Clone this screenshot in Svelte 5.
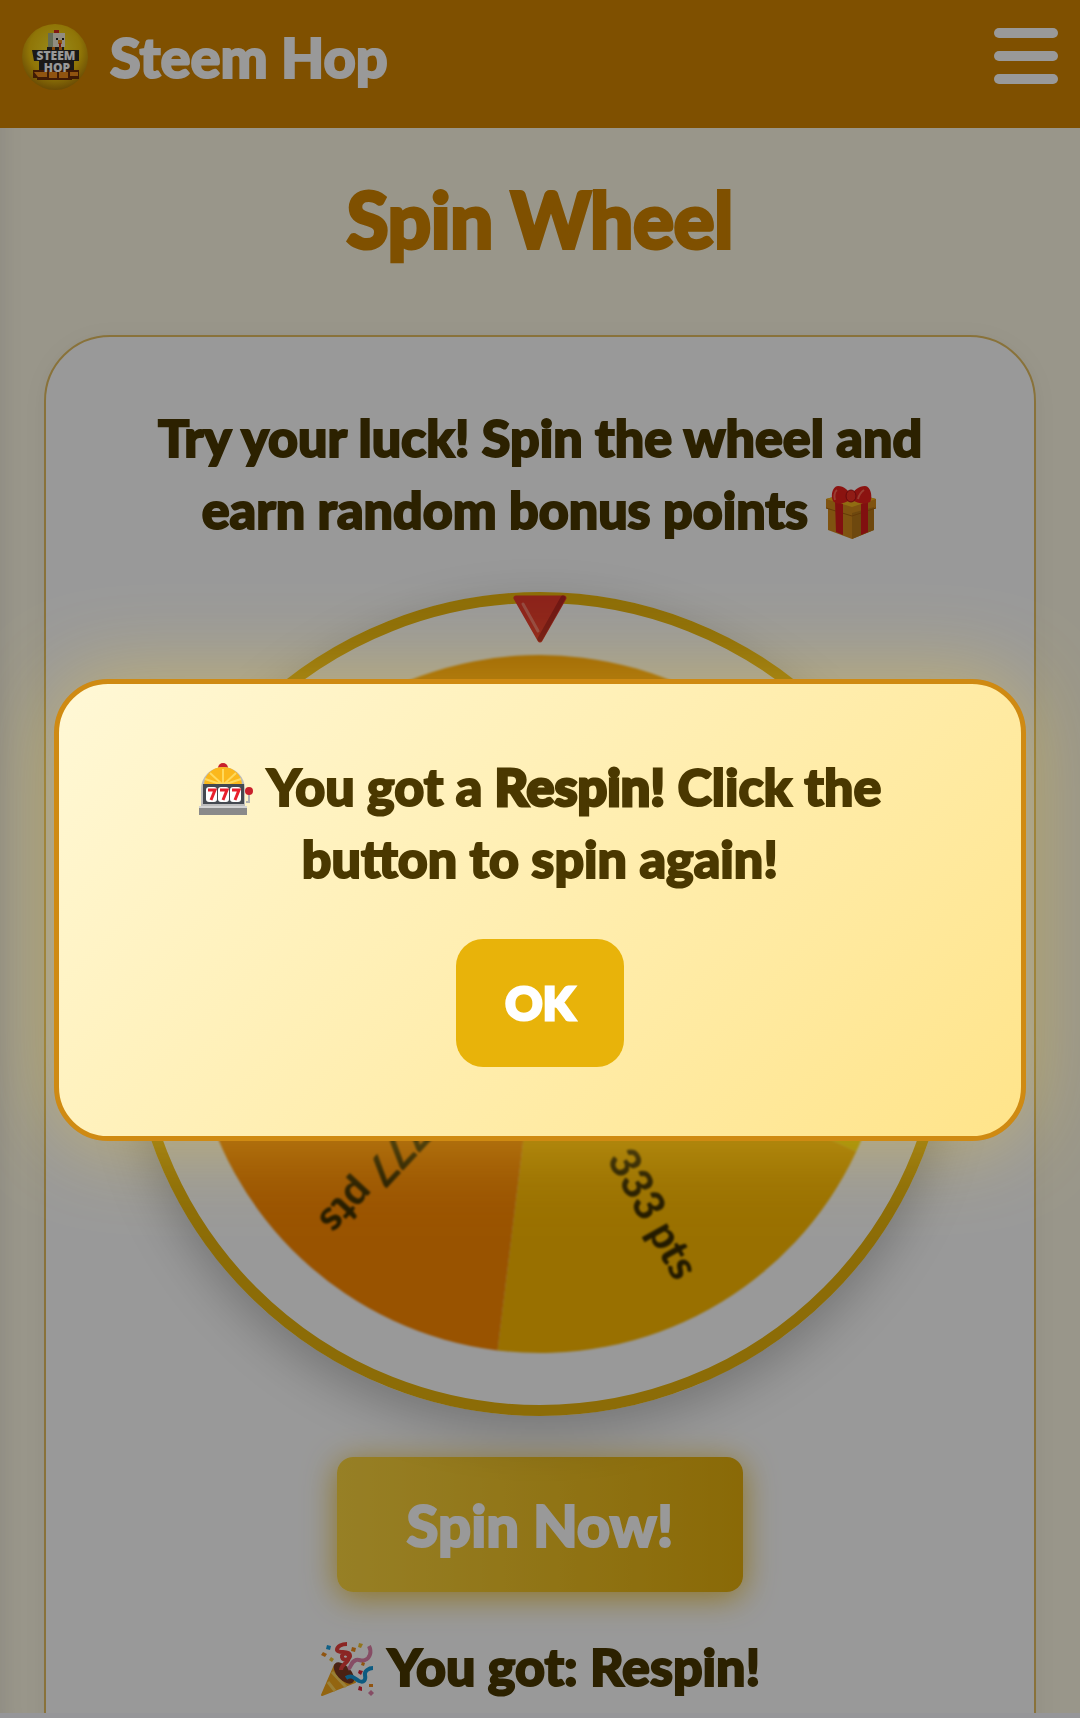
<script>
  let menuOpen = false
  let showModal = true
  let spinning = false
  let prize = 'Respin'

  const RADIUS = 349
  const OFFSET = 25
  const SLICE = 72

  // Clockwise from the right-hand side
  const segments = [
    { label: '333 pts', color: '#ffbb00' },
    { label: '777 pts', color: '#ff8a00' },
    { color: '#ffc933' },
    { color: '#ffa200' },
    { color: '#ffdd00' }
  ]

  function point(deg) {
    const rad = (deg * Math.PI) / 180
    return `${(RADIUS * Math.cos(rad)).toFixed(1)} ${(RADIUS * Math.sin(rad)).toFixed(1)}`
  }

  function slicePath(i) {
    const start = OFFSET + i * SLICE
    return `M0 0 L${point(start)} A${RADIUS} ${RADIUS} 0 0 1 ${point(start + SLICE)} Z`
  }

  function spin() {
    spinning = true
    setTimeout(() => {
      spinning = false
      showModal = true
    }, 600)
  }

  function closeModal() {
    showModal = false
  }
</script>

<div class="page">
  <header class="navbar">
    <a class="brand" href="#home">
      <svg class="logo" viewBox="0 0 66 66" aria-hidden="true">
        <defs>
          <radialGradient id="ball" cx="50%" cy="40%" r="60%">
            <stop offset="0" stop-color="#ffe92e" />
            <stop offset="0.65" stop-color="#f0c40c" />
            <stop offset="1" stop-color="#b07c08" />
          </radialGradient>
        </defs>
        <circle cx="33" cy="33" r="33" fill="url(#ball)" />
        <path d="M10 26h15v-3h17v3h15v11h-5v12H17V37h-5z" fill="#2c2a28" />
        <path d="M32 6h5v4h-5z" fill="#d8281c" />
        <path d="M26 9h17v14H26z" fill="#f3ead8" />
        <path d="M26 9h5v14h-5z" fill="#a9b48e" />
        <path d="M34 14h2v2h-2zM40 14h2v2h-2z" fill="#222" />
        <path d="M36 16h4v4h-4z" fill="#f28a14" />
        <path d="M37 19h2v4h-2z" fill="#cc2418" />
        <path d="M30 23h3v3h-3zM37 23h3v3h-3z" fill="#e07812" />
        <path d="M11 46h46v9H50v1H15v-2h-4z" fill="#6b2c08" />
        <path d="M12 48h13v5H16zM27 48h8v6h-8zM37 48h9v6h-9zM48 48h8v4h-8z" fill="#f08c1c" />
        <text x="34" y="36" class="logo-text">STEEM</text>
        <text x="35" y="48" class="logo-text">HOP</text>
      </svg>
      <span>Steem Hop</span>
    </a>
    <button class="menu" aria-label="Toggle menu" on:click={() => (menuOpen = !menuOpen)}>
      <span></span>
      <span></span>
      <span></span>
    </button>
  </header>

  <main>
    <h1>Spin Wheel</h1>

    <section class="card">
      <p class="intro">
        Try your luck! Spin the wheel and earn random bonus points
        <svg class="emoji" viewBox="0 0 52 54" role="img" aria-label="gift">
          <path d="M1 14 26 7l25 7v9l-2 1v21L27 54 3 45V24l-2-1z" fill="#d48a1c" />
          <path d="M27 28 49 22v23L27 54z" fill="#b87818" />
          <path d="M1 14 26 7l25 7-24 8z" fill="#f2b41e" />
          <path d="M1 23 27 31l24-8" fill="none" stroke="#a8640c" stroke-width="1" />
          <path d="m10 16 8 3v31l-7-3zM36 19l7-3v31l-7 3z" fill="#d81c1c" />
          <path d="M26 14C18 20 12 19 9 17 5 13 7 1 13 1c6 0 11 5 13 9 2-4 8-9 14-9 6 0 8 12 5 16-4 2-11 3-19-3z" fill="#e8201c" />
          <path d="M12 5c-3 2-3 7-2 10M39 5c-3 2-5 5-6 9" fill="none" stroke="#ff6650" stroke-width="2" />
          <ellipse cx="26" cy="11" rx="5" ry="6" fill="#f03024" stroke="#a81014" />
        </svg>
      </p>

      <div class="wheel">
        <svg class="slices" class:spinning viewBox="-350 -350 700 700" role="img" aria-label="Prize wheel">
          {#each segments as seg, i}
            <path d={slicePath(i)} fill={seg.color} />
            {#if seg.label}
              <text
                class="slice-label"
                x="309"
                y="17"
                transform="rotate({OFFSET + SLICE * (i + 0.5)})">{seg.label}</text>
            {/if}
          {/each}
        </svg>
        <svg class="pointer" viewBox="0 0 54 48" aria-hidden="true">
          <path d="M3 3h48L27 45z" fill="#e8382c" stroke="#e8382c" stroke-width="5" stroke-linejoin="round" />
          <path d="M50 3 27 44" stroke="#b82420" stroke-width="5" stroke-linecap="round" />
          <path d="m10 9 15 27" stroke="#f4796c" stroke-width="3" stroke-linecap="round" />
        </svg>
      </div>

      <button class="spin" on:click={spin} disabled={spinning}>Spin Now!</button>

      <p class="result">
        <svg class="emoji" viewBox="0 0 52 54" role="img" aria-label="party">
          <path d="M1 53 14 23l20 17z" fill="#f5a81c" stroke="#f5a81c" stroke-width="2" stroke-linejoin="round" />
          <path d="m7 40 7 9M11 30l14 15" stroke="#ffd45c" stroke-width="3" />
          <ellipse cx="23" cy="31" rx="7" ry="13" transform="rotate(-43 23 31)" fill="#7c3820" />
          <path d="M20 28c0-6 8-7 8-13 0-5-8-4-7 0 1 5 9 2 8-2-1-5-12-1-13-5 0-4 5-6 10-6" fill="none" stroke="#e8403c" stroke-width="4" />
          <path d="M27 27c4-2 2-7 8-9 4-1 5 2 9 0 5-2 7-8 4-14" fill="none" stroke="#e080a8" stroke-width="4" />
          <path d="M25 36c6-4 9 1 13 3 5 2 7-1 6-6-1-4 4-7 8-7" fill="none" stroke="#1498d8" stroke-width="4" />
          <path d="m6 3 4 1-1 4-4-1z" fill="#1ca0e0" />
          <path d="m2 10 4 2-2 3-4-2zM31 5l4 1-1 4-4-1zM41 20l3 1-1 3-3-1zM48 42h4v3h-4z" fill="#f08c1c" />
          <path d="m10 15 3 2-2 3-3-2zM38 1l4 1-2 4-3-1z" fill="#f4c430" />
          <path d="m38 28 4 1-2 4-3-2zM38 44l3 1v4l-4-1z" fill="#e02838" />
          <path d="m50 48 3 3-3 3-3-3z" fill="#e080a8" />
        </svg>
        You got: {prize}!
      </p>
    </section>
  </main>
</div>

{#if showModal}
  <div class="overlay">
    <div class="modal" role="dialog" aria-modal="true" aria-labelledby="modal-text">
      <p id="modal-text">
        <svg class="emoji" viewBox="0 0 54 54" role="img" aria-label="slot machine">
          <circle cx="24" cy="6" r="5" fill="#c8202c" />
          <path d="M2 46V27a22 22 0 0 1 44 0v19z" fill="#bcbcbc" />
          <path d="M5 23a19 18 0 0 1 38 0z" fill="#fbb81c" />
          <path d="M24 23V7M24 23 11 11M24 23 37 11M24 23 6 17M24 23 42 17" stroke="#ffd95c" stroke-width="2" />
          <path d="M4 22h41v20H4z" fill="#444950" />
          <rect x="7" y="25" width="11" height="15" rx="3" fill="#fff" />
          <rect x="19" y="25" width="11" height="15" rx="3" fill="#fff" />
          <rect x="31" y="25" width="11" height="15" rx="3" fill="#fff" />
          <path d="M9 28h7l-4 10M21 28h7l-4 10M33 28h7l-4 10" fill="none" stroke="#e8202c" stroke-width="3" />
          <path d="M0 45h48v8H0z" fill="#8a8a8a" />
          <path d="M0 44h48v2H0z" fill="#d4d4d4" />
          <path d="M47 40h3V30" fill="none" stroke="#b0b0b0" stroke-width="2" />
          <circle cx="50" cy="29" r="4" fill="#c8202c" />
        </svg>
        You got a <strong>{prize}!</strong> Click the button to spin again!
      </p>
      <button class="ok" on:click={closeModal}>OK</button>
    </div>
  </div>
{/if}

<style>
  :global(body) {
    margin: 0;
    font-family: 'Lato', 'Open Sans', sans-serif;
    font-weight: 900;
    -webkit-text-stroke: 2px currentColor;
    background: #fffae6;
    overflow: hidden;
  }

  .page {
    height: 100vh;
    box-sizing: border-box;
    overflow: hidden;
    border-bottom: 5px solid #fafaff;
    box-shadow: inset 24px 0 24px -24px rgba(0, 0, 60, 0.1);
  }

  .navbar {
    display: flex;
    align-items: flex-start;
    justify-content: space-between;
    height: 128px;
    box-sizing: border-box;
    padding: 24px 22px 0;
    background: #d48600;
  }

  .brand {
    display: flex;
    align-items: center;
    gap: 22px;
    color: #fff;
    font-size: 56px;
    line-height: 66px;
    text-decoration: none;
  }

  .logo {
    width: 66px;
    height: 66px;
  }

  .logo-text {
    font-family: 'Open Sans', sans-serif;
    font-size: 12px;
    font-weight: 800;
    fill: #fff;
    text-anchor: middle;
    -webkit-text-stroke: 0;
  }

  .menu {
    display: flex;
    flex-direction: column;
    gap: 13px;
    padding: 4px 0 0;
    border: none;
    background: none;
    cursor: pointer;
  }

  .menu span {
    width: 64px;
    height: 10px;
    border-radius: 5px;
    background: #fff;
  }

  main {
    padding: 0 44px;
  }

  h1 {
    margin: 0;
    padding: 41px 0 66px;
    color: #d48600;
    font-size: 76px;
    line-height: 100px;
    text-align: center;
    -webkit-text-stroke-width: 4px;
  }

  .card {
    display: flex;
    flex-direction: column;
    align-items: center;
    height: 1500px;
    box-sizing: border-box;
    padding: 64px 60px;
    border: 2px solid #e4bf62;
    border-radius: 66px;
    background: #fff;
    box-shadow: 0 4px 24px rgba(0, 0, 0, 0.05);
  }

  .intro,
  .result,
  .modal p {
    margin: 0;
    font-size: 52px;
    line-height: 72px;
    text-align: center;
  }

  .intro,
  .result {
    color: #4a3800;
  }

  .emoji {
    width: 54px;
    height: 54px;
    vertical-align: -10px;
  }

  .intro .emoji {
    margin-left: 4px;
  }

  .result .emoji,
  .modal .emoji {
    margin-right: 4px;
  }

  .wheel {
    position: relative;
    display: flex;
    align-items: center;
    justify-content: center;
    width: 824px;
    height: 824px;
    box-sizing: border-box;
    margin-top: 47px;
    border: 11px solid #e9b50c;
    border-radius: 50%;
    box-shadow: 0 16px 50px rgba(0, 0, 0, 0.24);
  }

  .slices {
    width: 700px;
    height: 700px;
    filter: blur(1px);
  }

  .slices.spinning {
    transform: rotate(720deg);
    transition: transform 0.6s;
  }

  .slice-label {
    font-size: 42px;
    font-weight: 900;
    fill: #3a2c00;
    text-anchor: end;
    -webkit-text-stroke: 1px #3a2c00;
  }

  .pointer {
    position: absolute;
    top: -8px;
    left: 50%;
    width: 54px;
    height: 48px;
    transform: translateX(-50%);
  }

  .spin {
    margin: 41px 0 38px;
    padding: 0 70px;
    border: none;
    border-radius: 16px;
    background: linear-gradient(to right, #fcd53f, #e6b00c);
    box-shadow: 0 5px 32px rgba(234, 179, 8, 0.8);
    color: #fff;
    font: inherit;
    font-size: 58px;
    line-height: 135px;
    cursor: pointer;
    -webkit-text-stroke: 2px #fff;
  }

  .overlay {
    position: fixed;
    inset: 0;
    display: flex;
    flex-direction: column;
    justify-content: center;
    padding: 102px 54px 0;
    background: rgba(0, 0, 0, 0.4);
  }

  .modal {
    padding: 66px 120px 69px;
    border: 5px solid #cf8a12;
    border-radius: 54px;
    background: linear-gradient(135deg, #fff8d6, #ffe48a);
    box-shadow: 0 0 86px rgba(255, 215, 60, 0.42);
    text-align: center;
  }

  .modal p {
    color: #4a3800;
  }

  .modal strong {
    font-weight: 900;
    -webkit-text-stroke-width: 3px;
  }

  .ok {
    width: 168px;
    margin-top: 45px;
    padding: 0;
    border: none;
    border-radius: 27px;
    background: #e8b30a;
    color: #fff;
    font: inherit;
    font-size: 46px;
    line-height: 128px;
    cursor: pointer;
    -webkit-text-stroke: 3px #fff;
  }
</style>
